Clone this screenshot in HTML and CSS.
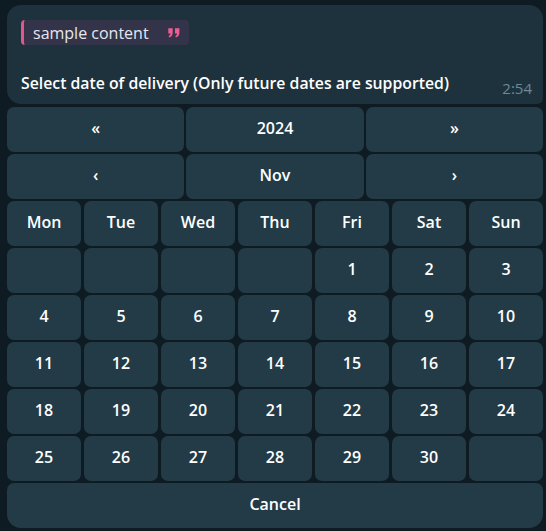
FILE: index.html
```html
<!DOCTYPE html>
<html>
<head>
<meta charset="utf-8">
<link rel="stylesheet" href="styles.css">
</head>
<body>
<div class="wrap">
  <div class="bubble">
    <div class="quote">
      <span class="quote-text">sample content</span>
      <svg class="quote-icon" width="12" height="10" viewBox="0 0 12 10">
        <path d="M0.3 0.3h4.4v4.4c0 2.3-1.2 3.9-3.4 4.8l-0.7-1.3c1.1-0.6 1.7-1.4 1.8-2.6H0.3z M7 0.3h4.4v4.4c0 2.3-1.2 3.9-3.4 4.8l-0.7-1.3c1.1-0.6 1.7-1.4 1.8-2.6H7z" fill="#ef5b92"/>
      </svg>
    </div>
    <div class="msg-row">
      <span class="msg">Select date of delivery (Only future dates are supported)</span>
      <span class="time">2:54</span>
    </div>
  </div>
  <div class="keyboard">
    <div class="row3">
      <button class="btn">«</button>
      <button class="btn">2024</button>
      <button class="btn">»</button>
    </div>
    <div class="row3">
      <button class="btn">‹</button>
      <button class="btn">Nov</button>
      <button class="btn">›</button>
    </div>
    <div class="grid7">
      <button class="btn">Mon</button>
      <button class="btn">Tue</button>
      <button class="btn">Wed</button>
      <button class="btn">Thu</button>
      <button class="btn">Fri</button>
      <button class="btn">Sat</button>
      <button class="btn">Sun</button>
      <button class="btn"></button>
      <button class="btn"></button>
      <button class="btn"></button>
      <button class="btn"></button>
      <button class="btn">1</button>
      <button class="btn">2</button>
      <button class="btn">3</button>
      <button class="btn">4</button>
      <button class="btn">5</button>
      <button class="btn">6</button>
      <button class="btn">7</button>
      <button class="btn">8</button>
      <button class="btn">9</button>
      <button class="btn">10</button>
      <button class="btn">11</button>
      <button class="btn">12</button>
      <button class="btn">13</button>
      <button class="btn">14</button>
      <button class="btn">15</button>
      <button class="btn">16</button>
      <button class="btn">17</button>
      <button class="btn">18</button>
      <button class="btn">19</button>
      <button class="btn">20</button>
      <button class="btn">21</button>
      <button class="btn">22</button>
      <button class="btn">23</button>
      <button class="btn">24</button>
      <button class="btn">25</button>
      <button class="btn">26</button>
      <button class="btn">27</button>
      <button class="btn">28</button>
      <button class="btn">29</button>
      <button class="btn">30</button>
      <button class="btn"></button>
    </div>
    <button class="btn cancel">Cancel</button>
  </div>
</div>
</body>
</html>
```

FILE: styles.css
```css
html, body {
  margin: 0;
  padding: 0;
  background: #0f1b22;
  width: 546px;
  height: 531px;
  overflow: hidden;
}
body {
  font-family: "Open Sans", "Noto Sans", sans-serif;
  color: #ffffff;
}
.wrap {
  padding: 5px 3px 0 7px;
  width: 536px;
  display: flex;
  flex-direction: column;
  gap: 3px;
}
.bubble {
  background: #1e323d;
  border-radius: 14px 14px 6px 14px;
  height: 99px;
  box-sizing: border-box;
  padding: 15px 11px 0 14px;
  display: flex;
  flex-direction: column;
}
.quote {
  align-self: flex-start;
  height: 25px;
  width: 168px;
  box-sizing: border-box;
  background: #33344a;
  border-left: 3px solid #e4558a;
  border-radius: 4px;
  display: flex;
  align-items: center;
  padding-left: 9px;
  font-size: 16px;
  color: #e6e8ee;
}
.quote-text {
  flex: 1;
  line-height: 20px;
}
.quote-icon {
  margin-right: 9px;
}
.msg-row {
  margin-top: 28px;
  display: flex;
  align-items: flex-end;
  justify-content: space-between;
}
.msg {
  font-size: 15.8px;
  font-weight: 600;
  line-height: 20px;
}
.time {
  font-size: 15px;
  color: #6d8997;
  line-height: 20px;
  position: relative;
  top: 5px;
}
.keyboard {
  display: flex;
  flex-direction: column;
  gap: 2px;
}
.row3 {
  display: grid;
  grid-template-columns: repeat(3, 1fr);
  gap: 2px;
}
.grid7 {
  display: grid;
  grid-template-columns: repeat(7, 74px);
  column-gap: 3px;
  row-gap: 2px;
}
.btn {
  height: 45px;
  background: #233b47;
  border: none;
  border-radius: 7px;
  color: #ffffff;
  font-family: "Open Sans", "Noto Sans", sans-serif;
  font-weight: 600;
  font-size: 16px;
  padding: 0 0 3px 0;
  margin: 0;
}
.cancel {
  width: 536px;
  border-radius: 7px 7px 14px 14px;
}
```
